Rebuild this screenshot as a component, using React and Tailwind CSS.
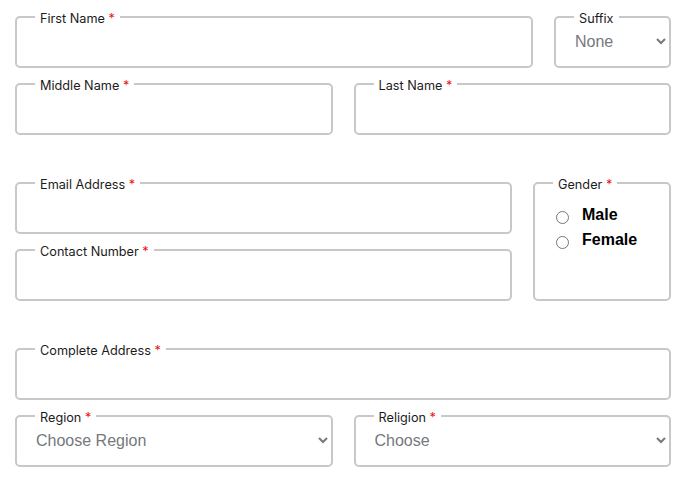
import { useState } from "react";

const box = "border-2 border-[#c8c8c8] rounded-[5px] min-w-0";

function Legend({ children, required = true }) {
  return (
    <legend className="ml-[18px] px-[5px] pt-[4px] text-[12.7px] leading-[16px] text-[#1c1c1c] font-['Inter',sans-serif]">
      {children}
      {required && <span className="text-[#ee1111]"> *</span>}
    </legend>
  );
}

function TextField({ label, className = "" }) {
  return (
    <fieldset className={`${box} h-[61px] flex ${className}`}>
      <Legend>{label}</Legend>
      <input type="text" className="w-full h-[28px] px-[21px] bg-transparent outline-none text-[16px]" />
    </fieldset>
  );
}

function SelectField({ label, placeholder, options = [], required = true }) {
  const [value, setValue] = useState("");
  return (
    <fieldset className={`${box} h-[61px]`}>
      <Legend required={required}>{label}</Legend>
      <select
        value={value}
        onChange={(e) => setValue(e.target.value)}
        className="w-full h-[28px] pl-[15px] pr-[2px] bg-transparent outline-none text-[16px] text-[#75787d] font-['Liberation_Sans',Arial,sans-serif]"
      >
        <option value="">{placeholder}</option>
        {options.map((o) => (
          <option key={o} value={o}>{o}</option>
        ))}
      </select>
    </fieldset>
  );
}

export default function App() {
  const [gender, setGender] = useState("");

  return (
    <div className="bg-white min-h-screen pl-[15px] pr-[11px] pt-[7px] font-['Inter',sans-serif]">
      {/* Names */}
      <div className="grid grid-cols-[518px_1fr] gap-x-[21px]">
        <TextField label="First Name" />
        <SelectField label="Suffix" placeholder="None" options={["Jr.", "Sr.", "II", "III"]} required={false} />
      </div>
      <div className="grid grid-cols-2 gap-x-[21px] mt-[6px]">
        <TextField label="Middle Name" />
        <TextField label="Last Name" />
      </div>

      {/* Contact */}
      <div className="grid grid-cols-[497px_1fr] gap-x-[21px] mt-[38px]">
        <div className="flex flex-col gap-[6px]">
          <TextField label="Email Address" />
          <TextField label="Contact Number" />
        </div>
        <fieldset className={`${box} pt-[9px]`}>
          <Legend>Gender</Legend>
          {["Male", "Female"].map((g) => (
            <label key={g} className="flex items-center h-[25px] pl-[21px] font-['Liberation_Sans',Arial,sans-serif] font-bold text-[16px] text-black">
              <input
                type="radio"
                name="gender"
                checked={gender === g}
                onChange={() => setGender(g)}
                className="w-[13px] h-[13px] m-0 mt-[5px] mr-[13px]"
              />
              {g}
            </label>
          ))}
        </fieldset>
      </div>

      {/* Address */}
      <div className="mt-[38px]">
        <TextField label="Complete Address" />
      </div>
      <div className="grid grid-cols-2 gap-x-[21px] mt-[6px]">
        <SelectField label="Region" placeholder="Choose Region" options={["NCR", "Region I", "Region II"]} />
        <SelectField label="Religion" placeholder="Choose" options={["Catholic", "Christian", "Islam", "Other"]} />
      </div>
    </div>
  );
}
